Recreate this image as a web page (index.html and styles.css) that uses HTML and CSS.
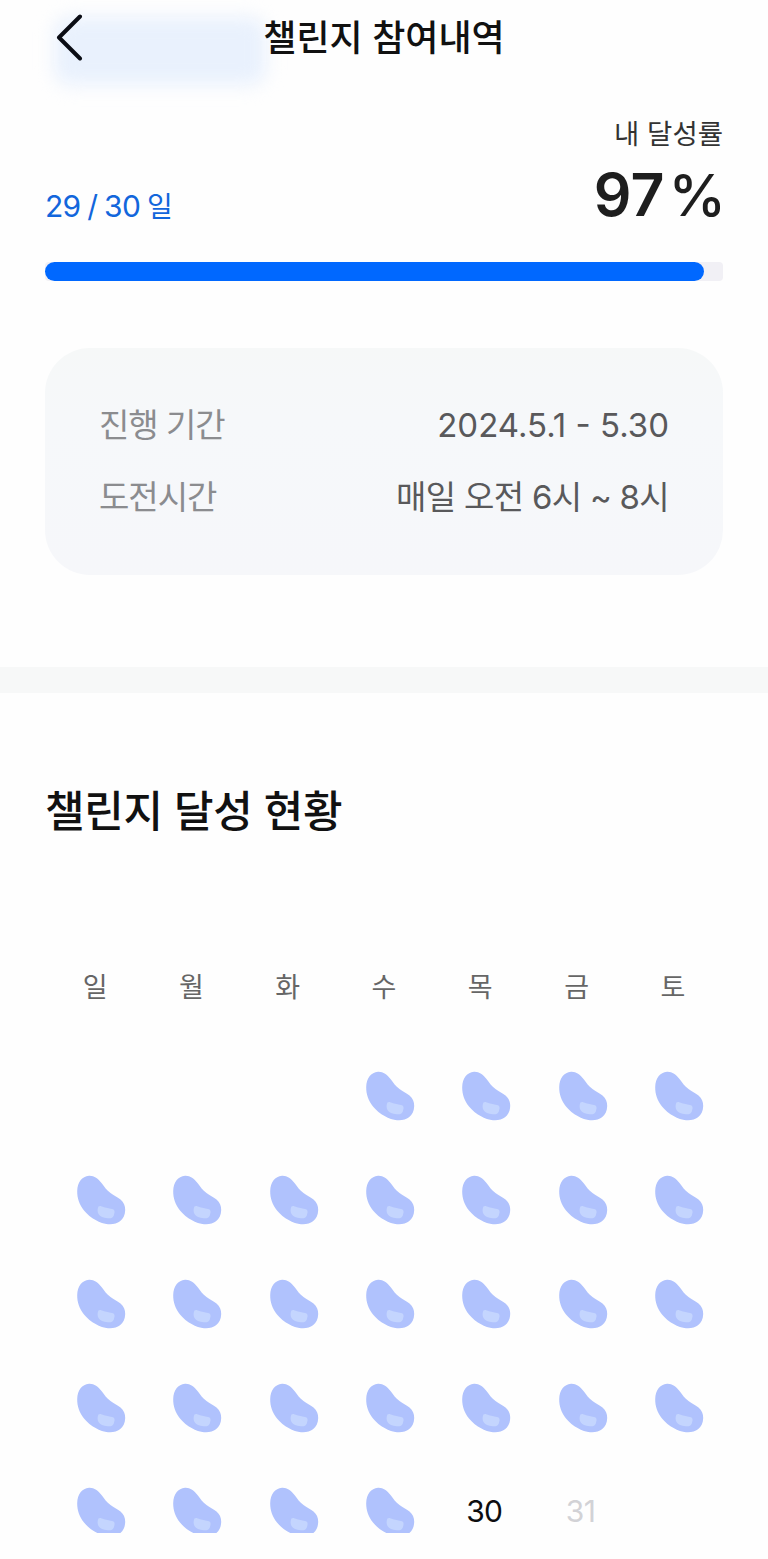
FILE: index.html
```html
<!DOCTYPE html>
<html lang="ko">
<head>
  <meta charset="UTF-8">
  <meta name="viewport" content="width=device-width, initial-scale=1.0">
  <title>챌린지 참여내역</title>
  <link rel="stylesheet" href="styles.css">
</head>
<body>
  <!-- Bean stamp, reused for every completed day -->
  <svg class="defs" width="0" height="0">
    <symbol id="bean" viewBox="0 0 50 50">
      <path fill="#b0c2fd" d="M13 0.800C18 0.500 22 3.500 25.500 8C28.500 12 30.500 15 34.500 18C38 20.700 41 21.800 44.500 24.500C47.800 27.200 49.300 31 49.200 35C49 40 47.500 43.500 44 46.300C41 48.800 37 49.500 32 49.200C24.500 48.600 14.500 43.500 8 35.500C3.500 30 1 23 1.200 16C1.400 7.500 6 1.300 13 0.800Z"/>
      <path fill="#c4d5fe" d="M22.500 31.500C23.800 30.300 25.500 31.200 28 32.200C31 33.300 34 33 37 34.300C39.500 35.500 38.500 38 37.800 40.500C36.800 43.300 34.500 43.500 31.500 43.200C27.500 42.800 24 41.500 22.500 39C21.300 37 21.300 33.500 22.500 31.500Z"/>
    </symbol>
  </svg>

  <header class="header">
    <div class="header-glow"></div>
    <button class="back-button" aria-label="뒤로">
      <svg width="28" height="48" viewBox="0 0 28 48">
        <path d="M25 3.500L4 24.500L25 45.500" fill="none" stroke="#0b0d14" stroke-width="4" stroke-linecap="round" stroke-linejoin="round"/>
      </svg>
    </button>
    <h1>챌린지 참여내역</h1>
  </header>

  <section class="summary">
    <div class="summary-row">
      <div class="days">29 / 30 <span class="unit">일</span></div>
      <div class="rate">
        <div class="rate-label">내 달성률</div>
        <div class="rate-value">97<span class="percent">%</span></div>
      </div>
    </div>
    <div class="progress"><div class="progress-bar" style="width: 97.200%"></div></div>

    <div class="info">
      <div class="info-row">
        <span class="info-label">진행 기간</span>
        <span class="info-value">2024.5.1 - 5.30</span>
      </div>
      <div class="info-row">
        <span class="info-label">도전시간</span>
        <span class="info-value time">매일 오전 6시 ~ 8시</span>
      </div>
    </div>
  </section>

  <div class="divider"></div>

  <section class="status">
    <h2>챌린지 달성 현황</h2>
    <div class="weekdays">
      <span>일</span><span>월</span><span>화</span><span>수</span><span>목</span><span>금</span><span>토</span>
    </div>
    <div class="calendar" id="calendar"></div>
  </section>

  <script>
    // May 2024 starts on a Wednesday, days 1-29 are done
    const calendar = document.getElementById("calendar");
    for (let i = 0; i < 3; i++) {
      calendar.appendChild(document.createElement("div"));
    }
    for (let day = 1; day <= 31; day++) {
      const cell = document.createElement("div");
      cell.className = "day";
      if (day <= 29) {
        cell.innerHTML = '<svg class="bean"><use href="#bean"/></svg>';
      } else {
        cell.textContent = day;
        cell.classList.add(day === 30 ? "today" : "disabled");
      }
      calendar.appendChild(cell);
    }
  </script>
</body>
</html>
```
FILE: styles.css
```css
* {
  box-sizing: border-box;
}

body {
  margin: 0;
  background-color: #fefefe;
  color: #111;
  font-family: Inter, "Noto Sans CJK KR", sans-serif;
}

.defs {
  position: absolute;
}

.header {
  position: relative;
  display: flex;
  justify-content: center;
  height: 100px;
  padding-top: 11px;
}

.header-glow {
  position: absolute;
  left: 54px;
  top: 17px;
  width: 212px;
  height: 68px;
  border-radius: 16px;
  background-color: #e9f1fd;
  filter: blur(9px);
}

.back-button {
  position: absolute;
  left: 55px;
  top: 13px;
  width: 28px;
  height: 48px;
  padding: 0;
  border: none;
  background: none;
}

.header h1 {
  position: relative;
  margin: 0;
  font-size: 36px;
  font-weight: 500;
  line-height: 54px;
}

.summary {
  padding: 0 45px;
}

.summary-row {
  display: flex;
  justify-content: space-between;
  align-items: flex-end;
  height: 162px;
  padding-bottom: 35px;
}

.days {
  color: #1266dc;
  font-size: 30px;
  line-height: 40px;
  letter-spacing: -0.7px;
  word-spacing: -1px;
}

.unit {
  font-size: 28px;
}

.rate {
  margin-bottom: -5px;
  text-align: right;
}

.rate-label {
  margin-bottom: 6px;
  color: #333;
  font-size: 27.500px;
  font-weight: 400;
  line-height: 36px;
}

.rate-value {
  margin-right: -3px;
  color: #1e1e1e;
  font-size: 59px;
  font-weight: 600;
  line-height: 74px;
}

.percent {
  margin-left: 4px;
  font-size: 58px;
  font-weight: 500;
}

.progress {
  height: 19px;
  border-radius: 4px;
  background-color: #f1f0f5;
}

.progress-bar {
  height: 100%;
  border-radius: 10px;
  background-color: #0068ff;
}

.info {
  display: flex;
  flex-direction: column;
  gap: 24px;
  height: 227px;
  margin-top: 67px;
  padding: 53px 54px 0 54px;
  border-radius: 45px;
  background: linear-gradient(#f6f8f8, #f6f8fa 30%, #f6f7fa);
}

.info-row {
  display: flex;
  justify-content: space-between;
  font-size: 33px;
  line-height: 48px;
}

.info-label {
  color: #8b8c8f;
  letter-spacing: -1px;
}

.info-value {
  color: #59595b;
}

.time {
  letter-spacing: -0.7px;
}

.divider {
  height: 26px;
  margin-top: 92px;
  background-color: #f7f8f8;
}

.status {
  padding: 87px 47px 0;
}

.status h2 {
  margin: 0 0 0 -2px;
  font-size: 43px;
  font-weight: 500;
  line-height: 62px;
  letter-spacing: -0.3px;
}

.weekdays {
  display: grid;
  grid-template-columns: repeat(7, 1fr);
  margin-top: 126px;
  color: #666;
  font-size: 27px;
  line-height: 40px;
  text-align: center;
}

.calendar {
  display: grid;
  grid-template-columns: repeat(7, 1fr);
  grid-auto-rows: 104px;
  height: 489px;
  margin-top: 36px;
  padding-left: 4px;
  margin-right: -4px;
  overflow: hidden;
}

.day {
  display: flex;
  justify-content: center;
  align-items: center;
  font-size: 30px;
  letter-spacing: -0.6px;
}

.bean {
  width: 50px;
  height: 50px;
  margin-left: 4px;
}

.today {
  padding-bottom: 2px;
  color: #0d0d0f;
}

.disabled {
  padding-bottom: 2px;
  color: #d2d2d6;
}
```
